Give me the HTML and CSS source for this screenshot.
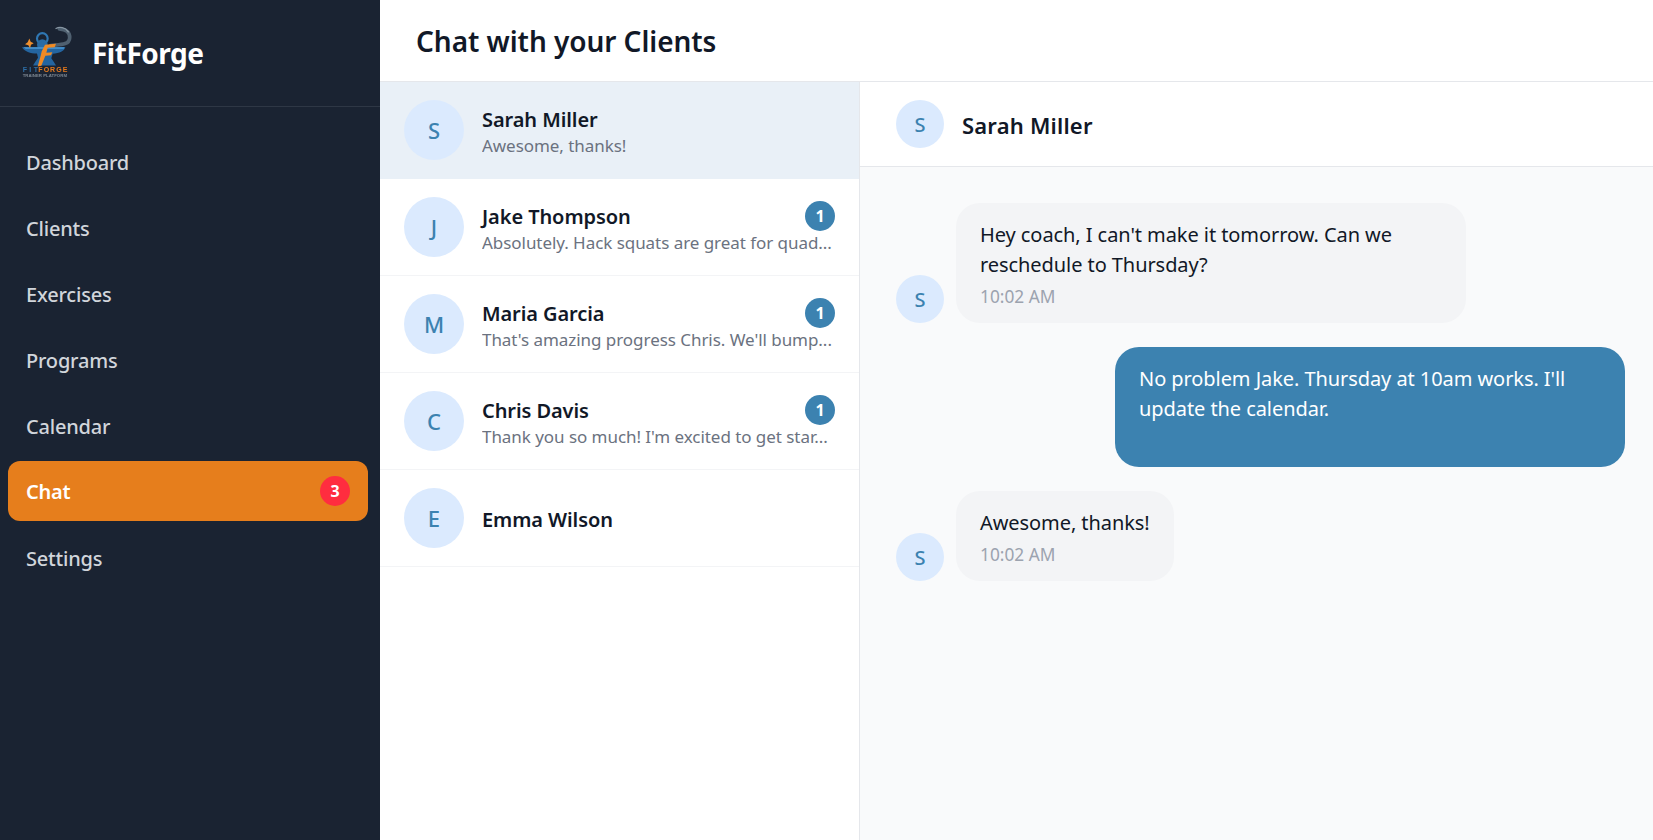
FILE: index.html
```html
<!DOCTYPE html>
<html lang="en">
<head>
<meta charset="utf-8">
<title>FitForge - Chat</title>
<link rel="stylesheet" href="styles.css">
</head>
<body>
<div class="app">
  <aside class="sidebar">
    <div class="brand">
      <svg class="logo" viewBox="18 25.5 180 180" aria-hidden="true">
        <path d="M122 93C150 90 178 92 179 70 180 54 168 44 148 43" fill="none" stroke="#4f6070" stroke-width="11" stroke-linecap="round"/>
        <path d="M138 42c10-6 28-4 37 10" fill="none" stroke="#8796a3" stroke-width="4" stroke-linecap="round"/>
        <circle cx="97" cy="72" r="16" fill="none" stroke="#2f77b3" stroke-width="6.5"/>
        <circle cx="97" cy="90" r="16" fill="#2a6ca6"/>
        <path d="M36 98h130c-2 11-18 18-38 20l-4 13 8 12 6 10H69l6-10 9-13-3-13c-20 0-38-7-45-19z" fill="#2465a0"/>
        <path d="M40 98h124l-3 5H47z" fill="#4b9ad8"/>
        <path d="M105 91l33-3-4 10-21 2-4 15 18-2-4 9-17 2-12 30-11 2 9-32 3-13z" fill="#f08a24"/>
        <path d="M58 72l4 10 9 4-8 5-3 10-5-9-10-3 8-6z" fill="#ee8f2e"/>
        <text class="logo-word" y="172"><tspan x="38" fill="#2d6ea6" textLength="46">FIT</tspan><tspan x="85" fill="#e6791b" textLength="87">FORGE</tspan></text>
        <text class="logo-sub" x="38" y="187" textLength="133">TRAINER PLATFORM</text>
      </svg>
      <span class="brand-name">FitForge</span>
    </div>
    <nav class="nav">
      <a class="nav-item">Dashboard</a>
      <a class="nav-item">Clients</a>
      <a class="nav-item">Exercises</a>
      <a class="nav-item">Programs</a>
      <a class="nav-item">Calendar</a>
      <a class="nav-item active">Chat <span class="nav-badge">3</span></a>
      <a class="nav-item">Settings</a>
    </nav>
  </aside>
  <main class="main">
    <header class="topbar"><h1>Chat with your Clients</h1></header>
    <div class="content">
      <section class="list">
        <div class="row selected">
          <div class="avatar">S</div>
          <div class="row-body">
            <div class="row-head"><span class="row-name">Sarah Miller</span></div>
            <div class="row-preview">Awesome, thanks!</div>
          </div>
        </div>
        <div class="row">
          <div class="avatar">J</div>
          <div class="row-body">
            <div class="row-head"><span class="row-name">Jake Thompson</span><span class="count">1</span></div>
            <div class="row-preview">Absolutely. Hack squats are great for quad...</div>
          </div>
        </div>
        <div class="row">
          <div class="avatar">M</div>
          <div class="row-body">
            <div class="row-head"><span class="row-name">Maria Garcia</span><span class="count">1</span></div>
            <div class="row-preview">That's amazing progress Chris. We'll bump...</div>
          </div>
        </div>
        <div class="row">
          <div class="avatar">C</div>
          <div class="row-body">
            <div class="row-head"><span class="row-name">Chris Davis</span><span class="count">1</span></div>
            <div class="row-preview">Thank you so much! I'm excited to get star...</div>
          </div>
        </div>
        <div class="row">
          <div class="avatar">E</div>
          <div class="row-body">
            <div class="row-head"><span class="row-name">Emma Wilson</span></div>
          </div>
        </div>
      </section>
      <section class="thread">
        <div class="thread-head">
          <div class="avatar small">S</div>
          <span class="thread-name">Sarah Miller</span>
        </div>
        <div class="messages">
          <div class="msg">
            <div class="avatar small">S</div>
            <div class="bubble">
              <div>Hey coach, I can't make it tomorrow. Can we reschedule to Thursday?</div>
              <div class="time">10:02 AM</div>
            </div>
          </div>
          <div class="msg mine">
            <div class="bubble">
              <div>No problem Jake. Thursday at 10am works. I'll update the calendar.</div>
              <div class="time">&nbsp;</div>
            </div>
          </div>
          <div class="msg">
            <div class="avatar small">S</div>
            <div class="bubble">
              <div>Awesome, thanks!</div>
              <div class="time">10:02 AM</div>
            </div>
          </div>
        </div>
      </section>
    </div>
  </main>
</div>
</body>
</html>
```
FILE: styles.css
```css
* { box-sizing: border-box; }
html, body { margin: 0; height: 100%; }
body {
  font-family: "Noto Sans", "Open Sans", "Liberation Sans", sans-serif;
  color: #111827;
  background: #fff;
  overflow: hidden;
}
.app { display: flex; height: 840px; }

.sidebar { width: 380px; flex: none; background: #1a2332; }
.brand {
  height: 107px;
  display: flex;
  align-items: center;
  gap: 16px;
  padding: 0 16px;
  border-bottom: 1px solid #2e3745;
}
.logo { width: 60px; height: 60px; flex: none; filter: blur(0.4px); }
.logo-word { font: 700 21px "Liberation Sans", sans-serif; }
.logo-sub { font: 700 13px "Liberation Sans", sans-serif; fill: #7d8792; }
.brand-name { font-size: 28px; font-weight: 700; color: #fff; letter-spacing: -0.5px; }
.nav { display: flex; flex-direction: column; gap: 6px; padding: 24px 12px 0 8px; }
.nav-item {
  height: 60px;
  display: flex;
  align-items: center;
  justify-content: space-between;
  padding: 2px 18px 0;
  border-radius: 12px;
  font-size: 20px;
  font-weight: 500;
  letter-spacing: -0.2px;
  color: #d1d5db;
}
.nav-item.active { background: #e67e1c; color: #fff; font-weight: 600; padding-top: 0; }
.nav-badge {
  width: 30px;
  height: 30px;
  border-radius: 50%;
  background: #ff2d3f;
  color: #fff;
  font-size: 16px;
  font-weight: 700;
  display: flex;
  align-items: center;
  justify-content: center;
}

.main { flex: 1; min-width: 0; display: flex; flex-direction: column; }
.topbar {
  height: 82px;
  flex: none;
  display: flex;
  align-items: center;
  padding: 0 36px;
  border-bottom: 1px solid #e5e7eb;
}
.topbar h1 { margin: 0; font-size: 28px; font-weight: 600; color: #111827; letter-spacing: -0.05px; }
.content { flex: 1; min-height: 0; display: flex; }

.list { width: 480px; flex: none; border-right: 1px solid #e5e7eb; }
.row {
  height: 97px;
  display: flex;
  align-items: center;
  gap: 18px;
  padding: 0 24px;
  border-bottom: 1px solid #f3f4f6;
}
.row.selected { background: #e9f0f7; border-bottom-color: #e9f0f7; }
.avatar {
  width: 60px;
  height: 60px;
  flex: none;
  border-radius: 50%;
  background: #dbeafe;
  color: #3c82b0;
  font-size: 22px;
  font-weight: 500;
  display: flex;
  align-items: center;
  justify-content: center;
}
.avatar.small { width: 48px; height: 48px; font-size: 20px; }
.row-body { flex: 1; min-width: 0; padding-top: 2px; }
.row-head { display: flex; align-items: center; justify-content: space-between; height: 30px; }
.row-name { font-size: 20px; font-weight: 600; color: #111827; letter-spacing: -0.08px; }
.count {
  width: 30px;
  height: 30px;
  border-radius: 50%;
  background: #3c82b0;
  color: #fff;
  font-size: 16px;
  font-weight: 700;
  display: flex;
  align-items: center;
  justify-content: center;
}
.row-preview {
  font-size: 17px;
  line-height: 24px;
  color: #6b7280;
  white-space: nowrap;
  overflow: hidden;
  letter-spacing: -0.05px;
}

.thread { flex: 1; min-width: 0; display: flex; flex-direction: column; background: #f9fafb; }
.thread-head {
  height: 85px;
  flex: none;
  display: flex;
  align-items: center;
  gap: 18px;
  padding: 0 36px;
  background: #fff;
  border-bottom: 1px solid #e5e7eb;
}
.thread-name { padding-top: 1px; font-size: 22px; font-weight: 600; color: #111827; letter-spacing: 0.2px; }
.messages { flex: 1; display: flex; flex-direction: column; gap: 24px; padding: 36px 28px 0 36px; }
.msg { display: flex; align-items: flex-end; gap: 12px; }
.msg.mine { justify-content: flex-end; }
.bubble {
  width: fit-content;
  max-width: 510px;
  padding: 17px 24px 14px;
  border-radius: 24px;
  background: #f3f4f6;
  font-size: 20px;
  line-height: 30px;
  letter-spacing: -0.07px;
  color: #111827;
}
.mine .bubble { width: 510px; background: #3c82b0; color: #fff; }
.time { margin-top: 3px; margin-bottom: -1px; font-size: 17.3px; line-height: 27px; letter-spacing: 0; color: #9ca3af; }
```
